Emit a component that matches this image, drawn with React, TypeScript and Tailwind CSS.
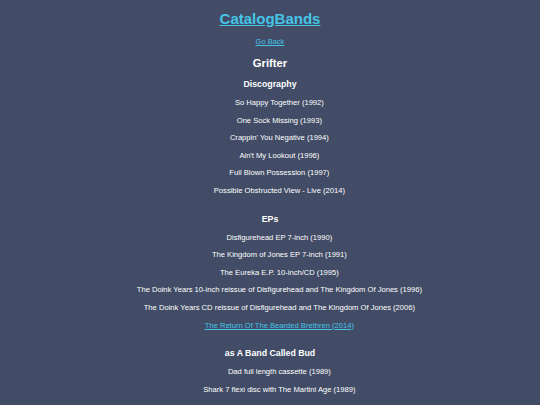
import React from "react";

type Section = { title: string; items: { label: string; link?: boolean }[] };

const sections: Section[] = [
  {
    title: "Discography",
    items: [
      { label: "So Happy Together (1992)" },
      { label: "One Sock Missing (1993)" },
      { label: "Crappin' You Negative (1994)" },
      { label: "Ain't My Lookout (1996)" },
      { label: "Full Blown Possession (1997)" },
      { label: "Possible Obstructed View - Live (2014)" },
    ],
  },
  {
    title: "EPs",
    items: [
      { label: "Disfigurehead EP 7-inch (1990)" },
      { label: "The Kingdom of Jones EP 7-inch (1991)" },
      { label: "The Eureka E.P. 10-inch/CD (1995)" },
      { label: "The Doink Years 10-inch reissue of Disfigurehead and The Kingdom Of Jones (1996)" },
      { label: "The Doink Years CD reissue of Disfigurehead and The Kingdom Of Jones (2006)" },
      { label: "The Return Of The Bearded Brethren (2014)", link: true },
    ],
  },
  {
    title: "as A Band Called Bud",
    items: [
      { label: "Dad full length cassette (1989)" },
      { label: "Shark 7 flexi disc with The Martini Age (1989)" },
    ],
  },
];

export default function App() {
  return (
    <div
      className="min-h-[405px] w-full bg-[#424c66] text-center text-white pt-[10px]"
      style={{ fontFamily: '"Liberation Sans", Arial, sans-serif' }}
    >
      <h1 className="text-[15px] font-bold leading-[18px]">
        <a href="#" className="text-[#45c4e6] underline">
          CatalogBands
        </a>
      </h1>
      <div className="mt-[5px] text-[7.5px] leading-[18px]">
        <a href="#" className="text-[#45c4e6] underline">
          Go Back
        </a>
      </div>
      <h2 className="mt-[3px] text-[11.25px] font-bold leading-[18px]">Grifter</h2>
      <div className="flex flex-col">
        {sections.map((s, i) => (
          <section key={s.title} className={i === 0 ? "mt-[3px]" : "mt-[10px]"}>
            <h3 className="text-[8.775px] font-bold leading-[18px]">{s.title}</h3>
            <ul className="mt-[1px] pl-[18.75px]">
              {s.items.map((it) => (
                <li key={it.label} className="text-[7.6px] leading-[17.6px]">
                  {it.link ? (
                    <a href="#" className="text-[#45c4e6] underline">
                      {it.label}
                    </a>
                  ) : (
                    it.label
                  )}
                </li>
              ))}
            </ul>
          </section>
        ))}
      </div>
    </div>
  );
}
